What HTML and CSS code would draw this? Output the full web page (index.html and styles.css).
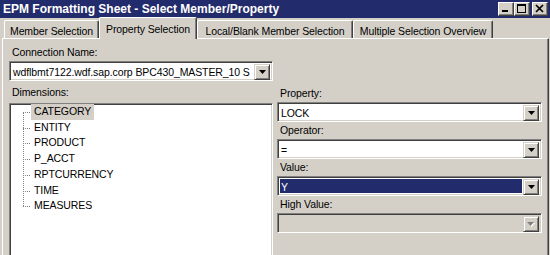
FILE: index.html
```html
<!DOCTYPE html>
<html>
<head>
<meta charset="utf-8">
<link rel="stylesheet" href="styles.css">
</head>
<body>
<div class="window">
  <div class="titlebar">
    <span class="title">EPM Formatting Sheet - Select Member/Property</span>
    <div class="caption-btns">
      <span class="cbtn"><svg width="14" height="12" viewBox="0 0 14 12"><rect x="3" y="7" width="6" height="2" fill="#000"/></svg></span>
      <span class="cbtn"><svg width="14" height="12" viewBox="0 0 14 12"><rect x="2.5" y="1.5" width="8" height="8" fill="none" stroke="#000"/><rect x="2" y="1" width="9" height="2" fill="#000"/></svg></span>
      <span class="cbtn close"><svg width="14" height="12" viewBox="0 0 14 12"><path d="M3 2 L10 9 M10 2 L3 9" stroke="#000" stroke-width="1.7" fill="none"/></svg></span>
    </div>
  </div>
  <div class="tabs">
    <div class="tab t1">Member Selection</div>
    <div class="tab t2 active">Property Selection</div>
    <div class="tab t3">Local/Blank Member Selection</div>
    <div class="tab t4">Multiple Selection Overview</div>
  </div>
  <div class="panel">
    <div class="grid">
      <div class="conn">
        <div class="label conn-label">Connection Name:</div>
        <div class="combo">
          <span class="val">wdflbmt7122.wdf.sap.corp BPC430_MASTER_10 S</span>
          <span class="drop"><svg width="7" height="4" viewBox="0 0 7 4"><polygon points="0,0 7,0 3.5,4" fill="#000"/></svg></span>
        </div>
      </div>
      <div></div>
      <div class="left">
        <div class="label dim-label">Dimensions:</div>
        <div class="tree">
          <ul>
            <li class="sel"><span>CATEGORY</span></li>
            <li><span>ENTITY</span></li>
            <li><span>PRODUCT</span></li>
            <li><span>P_ACCT</span></li>
            <li><span>RPTCURRENCY</span></li>
            <li><span>TIME</span></li>
            <li><span>MEASURES</span></li>
          </ul>
        </div>
      </div>
      <div class="right">
        <div class="label">Property:</div>
        <div class="combo">
          <span class="val">LOCK</span>
          <span class="drop"><svg width="7" height="4" viewBox="0 0 7 4"><polygon points="0,0 7,0 3.5,4" fill="#000"/></svg></span>
        </div>
        <div class="label">Operator:</div>
        <div class="combo">
          <span class="val">=</span>
          <span class="drop"><svg width="7" height="4" viewBox="0 0 7 4"><polygon points="0,0 7,0 3.5,4" fill="#000"/></svg></span>
        </div>
        <div class="label">Value:</div>
        <div class="combo focused">
          <span class="val">Y</span>
          <span class="drop"><svg width="7" height="4" viewBox="0 0 7 4"><polygon points="0,0 7,0 3.5,4" fill="#000"/></svg></span>
        </div>
        <div class="label">High Value:</div>
        <div class="combo disabled">
          <span class="val"></span>
          <span class="drop"><svg width="8" height="5" viewBox="0 0 8 5"><polygon points="1,1 8,1 4.5,5" fill="#fff"/><polygon points="0,0 7,0 3.5,4" fill="#808080"/></svg></span>
        </div>
      </div>
    </div>
  </div>
</div>
</body>
</html>
```
FILE: styles.css
```css
html, body {
  margin: 0;
  padding: 0;
}
body {
  width: 550px;
  height: 255px;
  overflow: hidden;
  background: #d4d0c8;
  font-family: "Liberation Sans", Arial, sans-serif;
  font-size: 10.5px;
  letter-spacing: -0.1px;
  color: #000;
}

.titlebar {
  height: 18px;
  background: #222b6b;
  display: flex;
  align-items: center;
  justify-content: space-between;
  padding: 0 2px 0 3px;
}
.title {
  color: #fff;
  font-weight: bold;
  font-size: 12px;
  letter-spacing: 0;
}
.caption-btns {
  display: flex;
}
.cbtn {
  width: 16px;
  height: 14px;
  box-sizing: border-box;
  background: #d4d0c8;
  border: 1px solid;
  border-color: #fff #404040 #404040 #fff;
  box-shadow: inset -1px -1px 0 #808080;
  display: flex;
  align-items: center;
  justify-content: center;
}
.cbtn svg {
  display: block;
}
.cbtn.close {
  margin-left: 2px;
}

.tabs {
  display: flex;
  align-items: flex-end;
  height: 20px;
  padding-left: 4px;
}
.tab {
  box-sizing: border-box;
  height: 18px;
  border-top: 1px solid #fff;
  border-left: 1px solid #fff;
  border-right: 1px solid #404040;
  border-radius: 2px 2px 0 0;
  box-shadow: inset -1px 0 0 #808080;
  padding-top: 4px;
  line-height: 13px;
  text-align: center;
  white-space: nowrap;
  background: #d4d0c8;
}
.tab.active {
  height: 22px;
  margin-bottom: -1px;
  padding-top: 3px;
  line-height: 16px;
  position: relative;
  z-index: 1;
}
.t1 { width: 95px; }
.t2 { width: 98px; }
.t3 { width: 156px; }
.t4 { width: 140px; }

.panel {
  box-sizing: border-box;
  margin-left: 2px;
  width: 547px;
  height: 217px;
  overflow: hidden;
  border-top: 1px solid #fff;
  border-left: 1px solid #fff;
  border-right: 1px solid #404040;
  box-shadow: inset -1px 0 0 #808080;
  padding: 4px 6px 0 6px;
}

.grid {
  display: grid;
  grid-template-columns: 264px 1fr;
  column-gap: 4px;
}

.label {
  line-height: 17px;
  padding-left: 3px;
  white-space: nowrap;
}
.conn-label {
  line-height: 18px;
}
.dim-label {
  margin-top: 3px;
}
.right {
  margin-top: 4px;
}

.combo {
  display: flex;
  height: 20px;
  box-sizing: border-box;
  border: 1px solid;
  border-color: #808080 #fff #fff #808080;
  box-shadow: inset 1px 1px 0 #404040, inset -1px -1px 0 #d4d0c8;
  padding: 2px;
  background: #fff;
}
.combo .val {
  flex: 1;
  min-width: 0;
  line-height: 16px;
  padding-left: 1px;
  overflow: hidden;
  white-space: nowrap;
}
.combo .drop {
  flex: none;
  width: 16px;
  height: 16px;
  box-sizing: border-box;
  background: #d4d0c8;
  border: 1px solid;
  border-color: #d4d0c8 #404040 #404040 #d4d0c8;
  box-shadow: inset 1px 1px 0 #fff, inset -1px -1px 0 #808080;
  display: flex;
  align-items: center;
  justify-content: center;
}
.combo .drop svg {
  display: block;
}
.combo.focused .val {
  background: #222b6b;
  color: #fff;
  margin-right: 1px;
}
.combo.disabled {
  background: #d4d0c8;
}

.tree {
  margin-top: 2px;
  height: 160px;
  box-sizing: border-box;
  border: 1px solid;
  border-color: #808080 #fff #fff #808080;
  box-shadow: inset 1px 1px 0 #404040, inset -1px -1px 0 #d4d0c8;
  background: #fff;
  padding: 0 2px 0 1px;
}
.tree ul {
  list-style: none;
  margin: 0;
  padding: 0 0 0 20px;
  position: relative;
}
.tree ul::before {
  content: "";
  position: absolute;
  left: 12px;
  top: 8px;
  bottom: 8px;
  border-left: 1px dotted #808080;
}
.tree li {
  line-height: 15.7px;
  position: relative;
}
.tree li::before {
  content: "";
  position: absolute;
  left: -8px;
  width: 7px;
  top: 8px;
  border-top: 1px dotted #808080;
}
.tree li span {
  display: inline-block;
  padding: 0 3px;
}
.tree li.sel span {
  background: #d4d0c8;
}
```
